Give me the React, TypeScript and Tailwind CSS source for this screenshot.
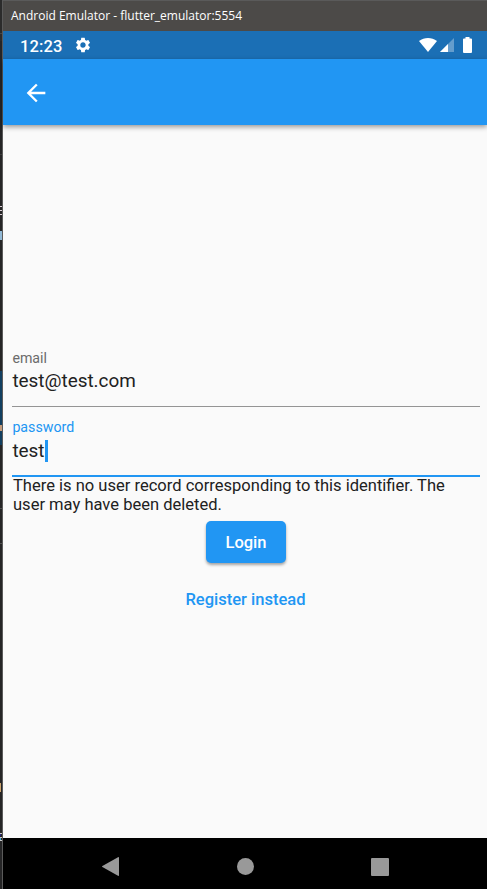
import React from "react";

function EditorEdge() {
  return (
    <div className="flex w-[3px] shrink-0 flex-col border-r border-[#5a5a5a] bg-[#252526]">
      <div className="h-[33px] bg-[#2b2b2b]" />
      <div className="h-px bg-[#484848]" />
      <div className="h-[7px] bg-[#2b2b2b]" />
      <div className="mt-[113px] h-px bg-[#3c3c3c]" />
      <div className="mt-[51px] h-px bg-[#d8cdd4]" />
      <div className="mt-[3px] h-px bg-[#d8cdd4]" />
      <div className="mt-[3px] h-px bg-[#d8cdd4]" />
      <div className="mt-4 h-[9px] bg-[#92b9d6]" />
      <div className="mt-[131px] h-[54px] bg-[#123f60]" />
      <div className="h-[6px] bg-[#c49b7b]" />
      <div className="h-[14px] bg-[#123f60]" />
      <div className="mt-[63px] h-px bg-[#505050]" />
      <div className="mt-[34px] h-px bg-[#505050]" />
      <div className="mt-[239px] h-[9px] w-px bg-[#c9a26d]" />
      <div className="mt-[41px] h-px bg-[#c8c8c8]" />
      <div className="h-[2px] w-px bg-[#252580]" />
      <div className="mt-px h-px bg-[#c8c8c8]" />
      <div className="h-[2px] w-px bg-[#42a5d5]" />
      <div className="h-px bg-[#c8c8c8]" />
    </div>
  );
}

function StatusBar() {
  return (
    <div className="flex h-7 items-center bg-[#1b6fb5] pl-[17px] pr-[15.5px] text-white">
      <span className="w-[42px] whitespace-nowrap pt-[3px] text-[16.5px] font-medium leading-7 tracking-[0.1px]">12:23</span>
      <svg className="ml-[12px] size-[18px]" viewBox="0 0 24 24" fill="currentColor">
        <path d="M19.14 12.94c.04-.3.06-.61.06-.94 0-.32-.02-.64-.07-.94l2.03-1.58a.49.49 0 0 0 .12-.61l-1.92-3.32a.488.488 0 0 0-.59-.22l-2.39.96c-.5-.38-1.03-.7-1.62-.94l-.36-2.54a.484.484 0 0 0-.48-.41h-3.84c-.24 0-.43.17-.47.41l-.36 2.54c-.59.24-1.13.57-1.62.94l-2.39-.96c-.22-.08-.47 0-.59.22L2.74 8.87c-.12.21-.08.47.12.61l2.03 1.58c-.05.3-.09.63-.09.94s.02.64.07.94l-2.03 1.58a.49.49 0 0 0-.12.61l1.92 3.32c.12.22.37.29.59.22l2.39-.96c.5.38 1.03.7 1.62.94l.36 2.54c.05.24.24.41.48.41h3.84c.24 0 .44-.17.47-.41l.36-2.54c.59-.24 1.13-.56 1.62-.94l2.39.96c.22.08.47 0 .59-.22l1.92-3.32c.12-.22.07-.47-.12-.61l-2.01-1.58zM12 15.6A3.61 3.61 0 0 1 8.4 12c0-1.98 1.62-3.6 3.6-3.6s3.6 1.62 3.6 3.6-1.62 3.6-3.6 3.6z" />
      </svg>
      <div className="ml-auto flex items-center">
        <svg className="h-[14px] w-[18px]" viewBox="0 0 18 14" fill="currentColor">
          <path d="M9 14L0 3.1C5.3-1 12.7-1 18 3.1Z" />
        </svg>
        <svg className="ml-[3px] size-[14px]" viewBox="0 0 14 14" fill="currentColor">
          <path d="M14 0V14H0Z" opacity=".32" />
          <path d="M8 6V14H0Z" />
        </svg>
        <svg className="ml-[9px] h-4 w-[9px]" viewBox="0 0 9 16" fill="currentColor">
          <path d="M2.5 0h4v1.6H8a1 1 0 0 1 1 1V15a1 1 0 0 1-1 1H1a1 1 0 0 1-1-1V2.6a1 1 0 0 1 1-1h1.5z" />
        </svg>
      </div>
    </div>
  );
}

function AppBar() {
  return (
    <div className="z-10 flex h-[66px] shrink-0 items-center bg-[#2196f3] pl-[19px] pt-px text-white shadow-[0_2px_5px_rgba(0,0,0,0.4)]">
      <svg className="size-7" viewBox="0 0 24 24" fill="currentColor">
        <path d="M20 11H7.83l5.59-5.59L12 4l-8 8 8 8 1.41-1.41L7.83 13H20v-2z" />
      </svg>
    </div>
  );
}

function LoginForm() {
  return (
    <div className="flex flex-1 flex-col bg-[#fafafa] pl-[9.4px] pr-[7.4px] pt-[224px] text-[#212121]">
      <label className="h-[18px] text-[14.2px] leading-[18px] text-[#6b6b6b]">email</label>
      <div className="h-10 border-b border-[#949494] text-[18.9px] leading-[28px]">test@test.com</div>
      <label className="mt-3 h-[18px] text-[14.2px] leading-[17px] text-[#2196f3]">password</label>
      <div className="flex h-10 border-b-2 border-[#2196f3] text-[18.9px] leading-[28px]">
        <span>test</span>
        <span className="mt-[3px] h-[22px] w-[3px] bg-[#2196f3]" />
      </div>
      <p className="-mt-px h-[39px] whitespace-nowrap pl-[0.6px] text-[16.55px] leading-[19px]">
        There is no user record corresponding to this identifier. The
        <br />
        user may have been deleted.
      </p>
      <button className="mt-[6px] h-[42px] w-[80px] self-center rounded-[5px] bg-[#2196f3] pt-[2px] text-[16.5px] font-medium text-white shadow-[0_2px_3px_rgba(0,0,0,0.35)]">
        Login
      </button>
      <button className="mt-[15px] h-[43px] self-center whitespace-nowrap pr-px pt-[2px] text-[16.55px] font-medium text-[#2196f3]">
        Register instead
      </button>
    </div>
  );
}

function NavigationBar() {
  return (
    <div className="flex h-[51px] shrink-0 items-center bg-black pl-[99px] pt-[6px] text-[#999999]">
      <svg className="h-[19px] w-[17px]" viewBox="0 0 17 19" fill="currentColor">
        <path d="M16 .2q1-.4 1 .6v17.4q0 1-1 .6L.4 10q-.8-.5 0-1z" />
      </svg>
      <div className="ml-[118px] size-[17px] rounded-full bg-[#999999]" />
      <div className="ml-[117px] size-[18px] rounded-[1px] bg-[#999999]" />
    </div>
  );
}

export default function App() {
  return (
    <div className="flex h-[889px] w-[487px] overflow-hidden bg-[#fafafa] font-['Roboto',sans-serif]">
      <EditorEdge />
      <main className="flex min-w-0 flex-1 flex-col">
        <header className="h-[31px] shrink-0 border-t border-[#5a5a5a] bg-[#4c4a48] pl-2 font-['Open_Sans',sans-serif] text-[12px] leading-[30px] text-white">
          Android Emulator - flutter_emulator:5554
        </header>
        <StatusBar />
        <AppBar />
        <LoginForm />
        <NavigationBar />
      </main>
    </div>
  );
}
